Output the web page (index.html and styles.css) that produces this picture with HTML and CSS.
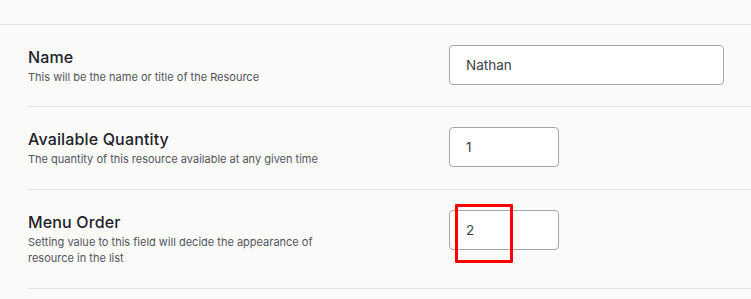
FILE: index.html
```html
<!DOCTYPE html>
<html lang="en">
<head>
<meta charset="utf-8">
<title>Resource settings</title>
<link rel="stylesheet" href="styles.css">
</head>
<body>
<div class="top"></div>
<div class="form">
  <div class="row first">
    <div class="label">
      <div class="title">Name</div>
      <div class="desc">This will be the name or title of the Resource</div>
    </div>
    <div class="field"><input class="input wide" type="text" value="Nathan"></div>
  </div>
  <div class="row">
    <div class="label">
      <div class="title">Available Quantity</div>
      <div class="desc">The quantity of this resource available at any given time</div>
    </div>
    <div class="field"><input class="input narrow" type="text" value="1"></div>
  </div>
  <div class="row">
    <div class="label">
      <div class="title">Menu Order</div>
      <div class="desc">Setting value to this field will decide the appearance of resource in the list</div>
    </div>
    <div class="field highlight-wrap">
      <input class="input narrow" type="text" value="2">
      <div class="highlight"></div>
    </div>
  </div>
</div>
</body>
</html>
```
FILE: styles.css
```css
html, body {
  margin: 0;
  padding: 0;
}
body {
  background: #fafaf9;
  font-family: Inter, "Noto Sans", sans-serif;
  color: #1d2127;
  overflow: hidden;
}
.top {
  height: 24px;
  border-bottom: 1px solid #e3e3e3;
}
.form {
  padding-left: 28px;
}
.row {
  display: grid;
  grid-template-columns: 421px 1fr;
  padding: 20px 0 22px;
  border-bottom: 1px solid #e3e3e3;
}
.row.first {
  padding-bottom: 21px;
}
.label {
  max-width: 310px;
}
.title {
  font-size: 16px;
  line-height: 24px;
  font-weight: 500;
  letter-spacing: 0.15px;
  color: #1f232a;
}
.desc {
  font-size: 11px;
  line-height: 16px;
  color: #52555c;
}
.field {
  display: flex;
  align-items: flex-start;
}
.highlight-wrap {
  position: relative;
}
.input {
  box-sizing: border-box;
  height: 40px;
  border: 1px solid #a3a8af;
  border-radius: 4px;
  background: #ffffff;
  padding: 0 16px;
  font-family: Inter, "Noto Sans", sans-serif;
  font-size: 13.5px;
  color: #3a3f47;
  outline: none;
}
.wide {
  width: 275px;
}
.narrow {
  width: 110px;
}
.highlight {
  position: absolute;
  left: 6px;
  top: -6px;
  width: 58px;
  height: 59px;
  box-sizing: border-box;
  border: 3px solid #ff0000;
  border-radius: 1px;
}
```
